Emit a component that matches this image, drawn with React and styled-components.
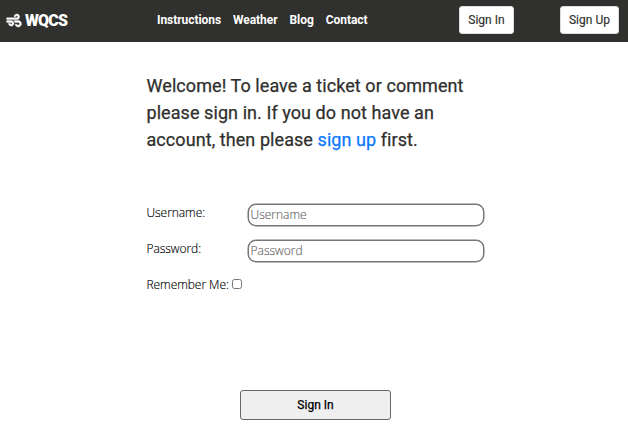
import React from 'react';
import styled, { createGlobalStyle } from 'styled-components';
import { FaWind } from 'react-icons/fa';

const Global = createGlobalStyle`
  * { box-sizing: border-box; }
  body { margin: 0; background: #fff; font-family: Roboto, sans-serif; color: #2f2f2d; }
`;
const Header = styled.header`
  height: 42px; background: #30302e; display: flex; align-items: flex-start; color: #fff;
`;
const Brand = styled.div`
  display: flex; align-items: center; gap: 3px; width: 151px; height: 40px; padding-left: 6px;
  font-size: 16px; font-weight: 900; letter-spacing: -0.8px;
`;
const WindIcon = styled(FaWind)`
  width: 16px; height: 15px; overflow: visible; stroke: #fff; stroke-width: 12px;
`;
const Nav = styled.nav`
  display: flex; gap: 12px; height: 40px; align-items: center; padding-left: 6px; width: 308px;
  font-size: 12px; font-weight: 700; letter-spacing: -0.06px;
`;
const NavButton = styled.button`
  height: 28px; width: ${p => p.$w}px; margin: 6px ${p => p.$gap || 0}px 0 0; padding: 0; border: 1px solid #ddd; border-radius: 3px;
  background: #fff; color: #30302e; font: 400 12px Roboto, sans-serif; letter-spacing: 0.04px; flex: none;
  -webkit-text-stroke: 0.15px currentColor;
`;
const Main = styled.main`padding: 30px 144px 0 146.5px;`;
const Welcome = styled.h1`
  margin: 0 0 50px; font-size: 18px; line-height: 27px; font-weight: 400; letter-spacing: 0.07px; white-space: nowrap;
  -webkit-text-stroke: 0.25px currentColor;
`;
const Link = styled.a`color: #0d78fd;`;
const Row = styled.div`
  display: flex; height: 36px; font: 300 12px/20px "Open Sans", sans-serif; letter-spacing: -0.05px; color: #000;
  -webkit-text-stroke: 0.15px currentColor;
`;
const Label = styled.label`width: ${p => p.$auto ? 'auto' : '101px'}; flex: none;`;
const Field = styled.input`
  width: 236px; height: 22px; margin: 0.5px 0 0 0.5px; padding: 0 1.5px; border: 1px solid #767676; border-radius: 8px;
  box-shadow: 0 0 0 0.5px #767676; font: 300 12px "Open Sans", sans-serif; letter-spacing: 0;
  &::placeholder { color: #666; -webkit-text-stroke: 0.15px #666; }
`;
const Check = styled.input`width: 10px; height: 10px; margin: 4px 0 0 3px;`;
const Submit = styled.button`
  display: block; width: 151px; height: 30px; margin: 79px 0 0 93.5px; border: 1px solid #666; border-radius: 3px;
  background: #efefef; color: #000; font: 400 12px Roboto, sans-serif; -webkit-text-stroke: 0.25px currentColor;
`;

export default function App() {
  return <><Global />
    <Header>
      <Brand><WindIcon />WQCS</Brand>
      <Nav><span>Instructions</span><span>Weather</span><span>Blog</span><span>Contact</span></Nav>
      <NavButton $w={55} $gap={46}>Sign In</NavButton>
      <NavButton $w={59}>Sign Up</NavButton>
    </Header>
    <Main>
      <Welcome>Welcome! To leave a ticket or comment<br />please sign in. If you do not have an<br />account, then please <Link>sign up</Link> first.</Welcome>
      <Row><Label>Username:</Label><Field placeholder="Username" /></Row>
      <Row><Label>Password:</Label><Field type="password" placeholder="Password" /></Row>
      <Row><Label $auto>Remember Me:</Label><Check type="checkbox" /></Row>
      <Submit>Sign In</Submit>
    </Main>
  </>;
}
